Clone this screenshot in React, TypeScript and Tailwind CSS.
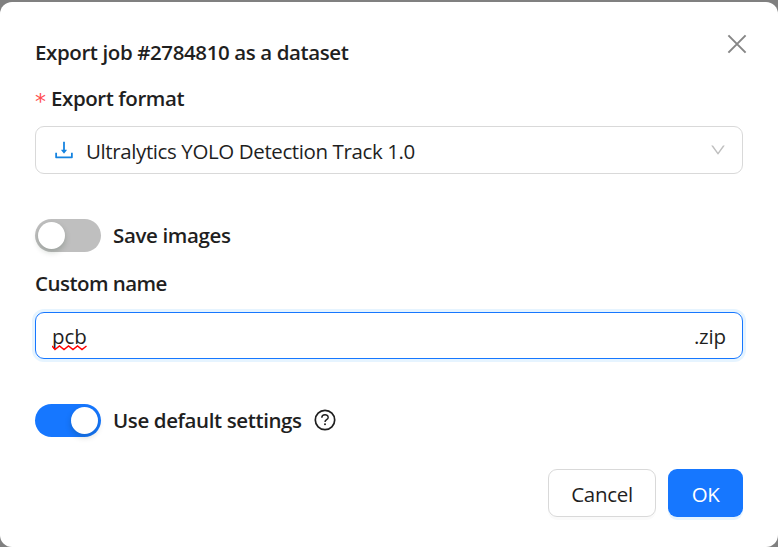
import React from 'react';
import { AiOutlineDown, AiOutlineDownload } from 'react-icons/ai';

function Switch({ checked }: { checked: boolean }) {
  return (
    <button
      role="switch"
      aria-checked={checked}
      className={`flex h-[33px] w-[66px] shrink-0 items-center rounded-full p-[3px] ${
        checked ? 'justify-end bg-[#1677ff]' : 'justify-start bg-[#bfbfbf]'
      }`}
    >
      <span className="size-[27px] rounded-full bg-white shadow-[0_3px_6px_rgba(0,35,11,0.2)]" />
    </button>
  );
}

export default function App() {
  return (
    <div className="h-[547px] w-[778px] overflow-hidden bg-[#808080] pt-[2px] font-['Open_Sans','Noto_Sans',sans-serif] text-[20.5px] leading-[33px] text-[#1f1f1f]">
      <div className="flex h-[545px] flex-col rounded-[12px] bg-white px-[35px]">
        <header className="flex h-[80px] items-start justify-between">
          <h1 className="mt-[34px] whitespace-nowrap font-semibold tracking-[-0.4px]">Export job #2784810 as a dataset</h1>
          <button aria-label="Close" className="-mr-[6px] mt-[30px] text-[#868686]">
            <svg width="24" height="24" viewBox="0 0 24 24" fill="none" stroke="currentColor" strokeWidth="2">
              <path d="M3.4 3.4 L20.6 20.6 M20.6 3.4 L3.4 20.6" />
            </svg>
          </button>
        </header>

        <label className="flex h-[33px] gap-[6px] font-semibold tracking-[-0.42px]">
          <span className="w-[10px] pt-[3px] font-['DejaVu_Sans',sans-serif] text-[22px] font-normal text-[#ff4d4f]">*</span>
          Export format
        </label>
        <div className="mt-[11px] flex h-[48px] shrink-0 items-center rounded-[9px] border border-[#d9d9d9] pl-[16px] pr-[15px]">
          <AiOutlineDownload size={24} className="text-[#1583e0]" />
          <span className="ml-[10px] mt-[3px] grow tracking-[-0.39px]">Ultralytics YOLO Detection Track 1.0</span>
          <AiOutlineDown size={18} className="text-[#bfbfbf]" />
        </div>

        <div className="mt-[45px] flex items-center gap-[12px]">
          <Switch checked={false} />
          <span className="font-semibold tracking-[-0.37px]">Save images</span>
        </div>

        <label className="mt-[15px] font-semibold tracking-[-0.54px]">Custom name</label>
        <div className="mt-[12px] flex h-[47px] shrink-0 items-center justify-between rounded-[9px] border border-[#1677ff] px-[16px] shadow-[0_0_0_3px_rgba(5,145,255,0.1)]">
          <span className="relative mt-px tracking-[-0.1px]">
            pcb
            <svg className="absolute left-0 top-[25px]" width="35" height="6" viewBox="0 0 35 6" fill="none">
              <path d="M0 1 L3 4.5 L7.5 1 L12 4.5 L16.5 1 L21 4.5 L25.5 1 L30 4.5 L34.5 1" stroke="#ff0000" strokeWidth="1.4" />
            </svg>
          </span>
          <span className="mt-px tracking-[-0.15px]">.zip</span>
        </div>

        <div className="mt-[45px] flex items-center">
          <Switch checked />
          <span className="ml-[12px] font-semibold tracking-[-0.39px]">Use default settings</span>
          <svg className="-mt-[2px] ml-[11px]" width="24" height="24" viewBox="0 0 24 24" fill="none" stroke="currentColor">
            <circle cx="12" cy="12" r="9.7" strokeWidth="1.7" />
            <path d="M8.8 9.7 C8.8 5.8 15.2 5.8 15.2 9.4 C15.2 11.8 12 11.6 12 14" strokeWidth="1.4" />
            <circle cx="12" cy="16.3" r="1" fill="currentColor" stroke="none" />
          </svg>
        </div>

        <footer className="mt-[32px] flex justify-end gap-[12px]">
          <button className="h-[48px] w-[108px] rounded-[9px] border border-[#d9d9d9] pt-[2px] tracking-[-0.3px] shadow-[0_3px_0_rgba(0,0,0,0.02)]">
            Cancel
          </button>
          <button className="h-[48px] w-[75px] rounded-[9px] bg-[#1677ff] pt-[2px] tracking-[-0.4px] text-white shadow-[0_3px_0_rgba(5,145,255,0.1)]">
            OK
          </button>
        </footer>
      </div>
    </div>
  );
}
